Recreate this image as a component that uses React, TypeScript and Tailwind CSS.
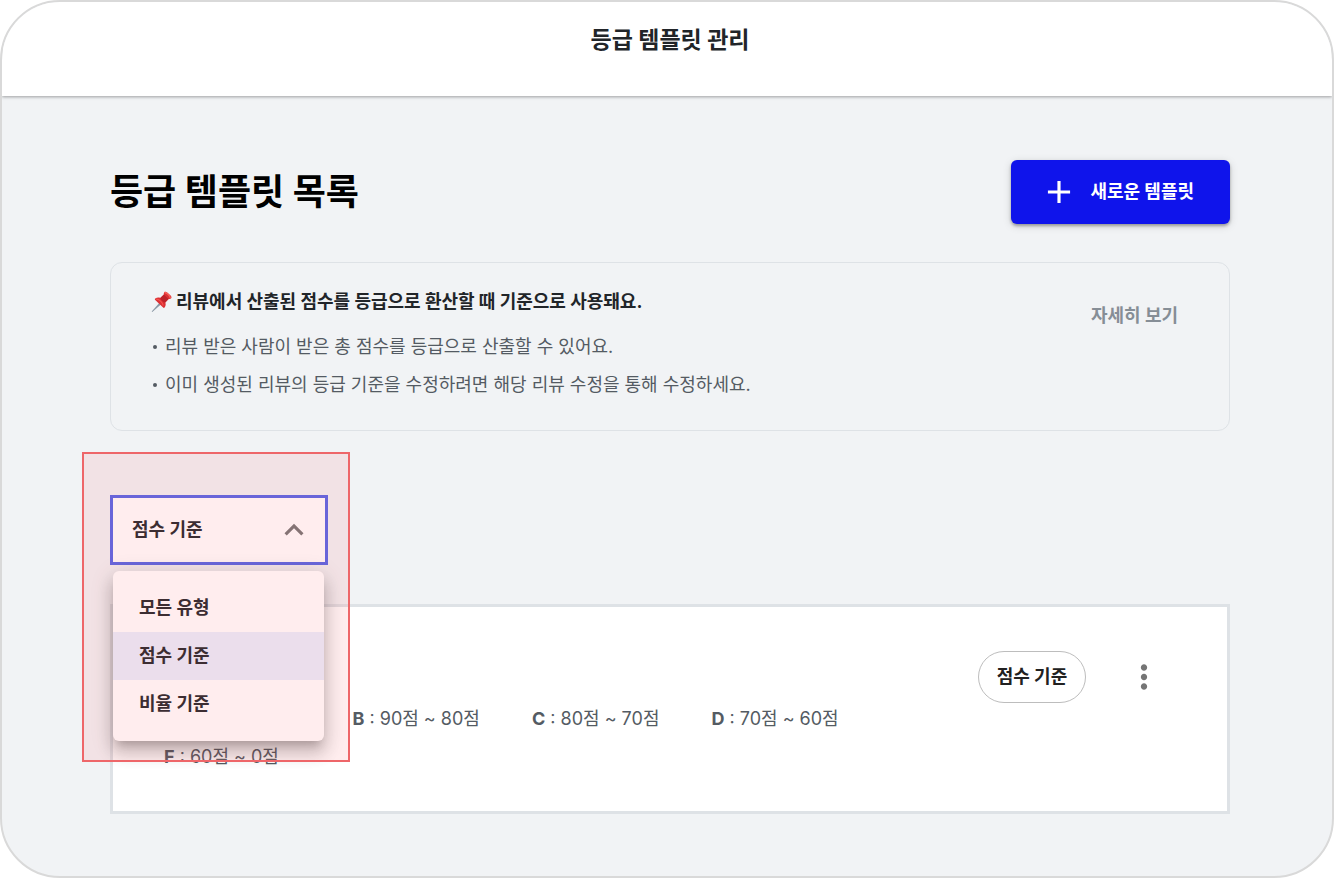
import { useState } from 'react';
import { MdAdd, MdExpandLess, MdMoreVert } from 'react-icons/md';

const TYPES = ['모든 유형', '점수 기준', '비율 기준'];

const NOTES = [
  '리뷰 받은 사람이 받은 총 점수를 등급으로 산출할 수 있어요.',
  '이미 생성된 리뷰의 등급 기준을 수정하려면 해당 리뷰 수정을 통해 수정하세요.',
];

const GRADES = [
  { name: 'A', range: '100점 ~ 90점' },
  { name: 'B', range: '90점 ~ 80점' },
  { name: 'C', range: '80점 ~ 70점' },
  { name: 'D', range: '70점 ~ 60점' },
  { name: 'F', range: '60점 ~ 0점' },
];

function PinIcon() {
  return (
    <svg width="21" height="22" viewBox="0 0 21 22" aria-hidden="true" className="shrink-0">
      <path d="M0.7 20.6 8.2 12l1.7 1.6-8.6 7.5z" fill="#8b98a5" />
      <path
        d="M4.3 7.4c1.6-1.1 3.5-1.2 5-.5l3.6-3.3c-.3-1 0-2 .7-2.6.7-.5 1.6-.3 2.6.4l3.4 3.2c.9.9 1.2 1.9.6 2.6-.6.7-1.6 1-2.6.7l-3.3 3.7c.7 1.6.5 3.4-.7 4.900-.4.5-1 .5-1.500.1L4.200 8.900c-.5-.5-.5-1.100.1-1.500z"
        fill="#dc3034"
      />
      <path d="M9.3 6.9l3.6-3.3 4.700 4.300-3.300 3.700c-2.200-.4-4.300-2.300-5-4.700z" fill="#bd222a" />
      <path d="M13.9 1.500c1.800.2 4.800 3 5.300 5" fill="none" stroke="#f9605a" strokeWidth="1.3" strokeLinecap="round" />
      <path d="M5.5 8.100c2.700.2 5.900 3.100 6.500 6" fill="none" stroke="#f4524e" strokeWidth="1.1" strokeLinecap="round" />
    </svg>
  );
}

function TypeFilter() {
  const [open, setOpen] = useState(true);
  const [selected, setSelected] = useState('점수 기준');

  return (
    <div className="relative h-[70px] w-[218px]">
      <select
        aria-label="유형"
        value={selected}
        onChange={(e) => setSelected(e.target.value)}
        onMouseDown={(e) => {
          e.preventDefault();
          setOpen(!open);
        }}
        className="size-full appearance-none border-3 border-[#5565e8] bg-white pl-[19px] text-lg font-bold text-[#212529] outline-none"
      >
        {TYPES.map((type) => (
          <option key={type}>{type}</option>
        ))}
      </select>
      <MdExpandLess size={38} className="pointer-events-none absolute top-4 right-[15px] text-[#757575]" />

      {/* Menu */}
      {open && (
        <ul className="absolute top-[76px] left-[3px] z-10 w-[211px] rounded-md bg-white py-[13px] shadow-[0_8px_8px_-5px_rgba(0,0,0,0.2),0_12px_15px_2px_rgba(0,0,0,0.14),0_5px_21px_3px_rgba(0,0,0,0.12)]">
          {TYPES.map((type) => (
            <li key={type}>
              <button
                type="button"
                onClick={() => {
                  setSelected(type);
                  setOpen(false);
                }}
                className={`h-12 w-full px-[26px] text-left text-lg font-bold text-[#212529] ${
                  type === selected ? 'bg-[#e9eefd]' : ''
                }`}
              >
                {type}
              </button>
            </li>
          ))}
        </ul>
      )}

      {/* Highlight */}
      <div className="pointer-events-none absolute -top-[43px] -left-7 z-20 h-[310px] w-[268px] border-2 border-[#ee6669] bg-[#ff6b76]/12" />
    </div>
  );
}

function TemplateCard() {
  return (
    <article className="flex items-start border-3 border-[#dee2e6] bg-white pt-11 pr-16 pb-[35px] pl-[51px]">
      <ul className="flex flex-1 flex-wrap gap-x-[52px] pt-[49px] text-lg/[38px] text-[#545b63]">
        {GRADES.map((grade) => (
          <li key={grade.name}>
            <b>{grade.name}</b> : {grade.range}
          </li>
        ))}
      </ul>
      <div className="flex items-center gap-[39px]">
        <span className="flex h-[52px] w-[108px] items-center justify-center rounded-full border border-[#bdbdbd] text-lg font-bold text-[#212121]">
          점수 기준
        </span>
        <button type="button" aria-label="더보기" className="text-[#757575]">
          <MdMoreVert size={38} />
        </button>
      </div>
    </article>
  );
}

export default function App() {
  return (
    <div className="min-h-screen overflow-hidden rounded-[60px] border-2 border-[#d9d9d9] bg-[#f1f3f5] font-[Inter,'Noto_Sans_CJK_KR',sans-serif]">
      <header className="relative h-[94px] bg-white pt-5 pr-[102px] pl-[108px] text-center shadow-[0_1px_3px_rgba(0,0,0,0.35)]">
        <p className="text-[23px]/[36px] font-bold text-[#212529]">등급 템플릿 관리</p>
      </header>

      <main className="pt-16 pr-[102px] pb-[62px] pl-[108px]">
        <div className="flex items-center justify-between">
          <h1 className="text-4xl font-bold text-black">등급 템플릿 목록</h1>
          <button
            type="button"
            className="flex h-16 items-center gap-3 rounded-md bg-[#0f14eb] pr-9 pl-[29px] text-lg font-bold text-white shadow-[0_2px_3px_rgba(0,0,0,0.3),0_2px_8px_rgba(0,0,0,0.15)]"
          >
            <MdAdd size={38} />
            새로운 템플릿
          </button>
        </div>

        {/* Guide */}
        <section className="mt-[38px] flex items-start justify-between rounded-xl border border-[#dee2e6] pt-5 pr-[51px] pb-[26px] pl-10">
          <div>
            <h2 className="mb-[7px] flex items-center gap-1 text-lg/[38px] font-bold text-[#212529]">
              <PinIcon />
              리뷰에서 산출된 점수를 등급으로 환산할 때 기준으로 사용돼요.
            </h2>
            <ul className="text-lg/[38px] text-[#545b63]">
              {NOTES.map((note) => (
                <li key={note} className="flex items-center gap-2 pl-0.5">
                  <span className="size-1 rounded-full bg-[#545b63]" />
                  {note}
                </li>
              ))}
            </ul>
          </div>
          <a href="#guide" className="mt-3.5 text-lg/[38px] font-bold text-[#868e96]">
            자세히 보기
          </a>
        </section>

        <div className="mt-16 mb-[39px]">
          <TypeFilter />
        </div>

        <TemplateCard />
      </main>
    </div>
  );
}
